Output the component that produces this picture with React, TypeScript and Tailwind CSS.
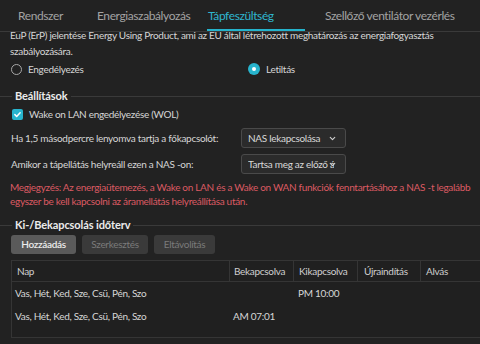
import { ChevronDown } from "lucide-react";

const TABS = [
    { label: "Rendszer", w: "w-[79px]" },
    { label: "Energiaszabályozás", w: "w-[111px]" },
    { label: "Tápfeszültség", w: "w-[117px]", active: true },
    { label: "Szellőző ventilátor vezérlés", w: "flex-1" },
];

const ROWS = [
    { days: "Vas, Hét, Ked, Sze, Csü, Pén, Szo", on: "", off: "PM 10:00" },
    { days: "Vas, Hét, Ked, Sze, Csü, Pén, Szo", on: "AM 07:01", off: "" },
];

function Legend({ title }: { title: string }) {
    return (
        <div className="flex items-center h-[14px]">
            <div className="w-[12px] h-px bg-[#3a3a3a]" />
            <span className="px-[3px] text-[11px] font-bold tracking-[-0.1px] text-[#ececec] whitespace-nowrap">{title}</span>
            <div className="flex-1 h-px bg-[#3a3a3a]" />
        </div>
    );
}

function Select({ value }: { value: string }) {
    return (
        <div className="relative w-[105px] h-[20px] rounded-[3px] border border-[#4a4a4a] bg-[#2b2b2b] flex items-center pl-[6px] overflow-hidden">
            <span className="block w-[86px] overflow-hidden whitespace-nowrap text-[#d8d8d8]">{value}</span>
            <ChevronDown className="absolute right-[8px] top-[5px] w-[9px] h-[9px] text-[#d0d0d0]" strokeWidth={3} />
        </div>
    );
}

export default function App() {
    return (
        <div className="w-[480px] h-[344px] overflow-hidden bg-[#222222] text-[#d6d6d6] text-[10px] tracking-[-0.3px] font-['Lato',sans-serif]">
            {/* Tabs */}
            <div className="flex h-[32px] border-b border-[#3a3a3a] pl-[18px] text-[12px] tracking-[-0.4px]">
                {TABS.map((t) => (
                    <div key={t.label} className={`relative ${t.w} h-[31px] flex items-center whitespace-nowrap ${t.active ? "text-[#2fb6cf]" : "text-[#a3a3a3]"}`}>
                        {t.label}
                        {t.active && <div className="absolute left-[-1px] bottom-0 w-[98px] h-[2px] bg-[#25b3cc]" />}
                    </div>
                ))}
            </div>

            <div className="mt-[-5px] px-[10px] leading-[16px]">
                <p>EuP (ErP) jelentése Energy Using Product, ami az EU által létrehozott meghatározás az energiafogyasztás</p>
                <p>szabályozására.</p>
            </div>

            {/* Radios */}
            <div className="flex items-center h-[20px] pl-[11px]">
                <div className="flex items-center w-[237px] gap-[6px]">
                    <div className="w-[11px] h-[11px] rounded-full border-[1.5px] border-[#a8a8a8]" />
                    <span>Engedélyezés</span>
                </div>
                <div className="flex items-center gap-[6px]">
                    <div className="w-[12px] h-[12px] rounded-full bg-[#27b4cd] flex items-center justify-center">
                        <div className="w-[4px] h-[4px] rounded-full bg-white" />
                    </div>
                    <span>Letiltás</span>
                </div>
            </div>

            {/* Beállítások */}
            <div className="mt-[10px]">
                <Legend title="Beállítások" />
            </div>
            <div className="px-[10px]">
                <div className="flex items-center h-[16px] mt-[3px] gap-[6px] pl-[2px]">
                    <div className="w-[11px] h-[11px] rounded-[2px] bg-[#27b4cd] flex items-center justify-center">
                        <svg viewBox="0 0 12 12" className="w-[9px] h-[9px]" fill="none" stroke="white" strokeWidth="2" strokeLinecap="round" strokeLinejoin="round">
                            <path d="M2.5 6.2l2.4 2.4 4.6-5" />
                        </svg>
                    </div>
                    <span>Wake on LAN engedélyezése (WOL)</span>
                </div>
                <div className="flex items-center h-[20px] mt-[6px]">
                    <span className="w-[231px] pl-[1px]">Ha 1,5 másodpercre lenyomva tartja a főkapcsolót:</span>
                    <Select value="NAS lekapcsolása" />
                </div>
                <div className="flex items-center h-[20px] mt-[6px]">
                    <span className="w-[231px] pl-[1px]">Amikor a tápellátás helyreáll ezen a NAS -on:</span>
                    <Select value="Tartsa meg az előző á" />
                </div>
                <div className="mt-[6px] text-[#dc5a62] leading-[14px] whitespace-nowrap">
                    <p>Megjegyzés: Az energiaütemezés, a Wake on LAN és a Wake on WAN funkciók fenntartásához a NAS -t legalább</p>
                    <p>egyszer be kell kapcsolni az áramellátás helyreállítása után.</p>
                </div>
            </div>

            {/* Ki-/Bekapcsolás időterv */}
            <div className="mt-[10px]">
                <Legend title="Ki-/Bekapcsolás időterv" />
            </div>
            <div className="px-[11px]">
                <div className="flex gap-[6px] mt-[3px]">
                    <button className="h-[19px] w-[65px] rounded-[3px] bg-[#5a5a5a] text-[#ececec] font-semibold">Hozzáadás</button>
                    <button className="h-[19px] w-[66px] rounded-[3px] bg-[#3a3a3a] text-[#7a7a7a]">Szerkesztés</button>
                    <button className="h-[19px] w-[61px] rounded-[3px] bg-[#3a3a3a] text-[#7a7a7a]">Eltávolítás</button>
                </div>

                <div className="mt-[6px] w-[480px] border border-[#353535] bg-[#202020]">
                    <div className="flex h-[21px] border-b border-[#353535] text-[#cfcfcf]">
                        <div className="w-[218px] pl-[5px] flex items-center border-r border-[#353535]">Nap</div>
                        <div className="w-[64px] pl-[4px] flex items-center border-r border-[#353535]">Bekapcsolva</div>
                        <div className="w-[64px] pl-[5px] flex items-center border-r border-[#353535]">Kikapcsolva</div>
                        <div className="w-[63px] pl-[6px] flex items-center border-r border-[#353535]">Újraindítás</div>
                        <div className="flex-1 pl-[5px] flex items-center">Alvás</div>
                    </div>
                    <div className="pb-[9px]">
                        {ROWS.map((r, i) => (
                            <div key={i} className="flex h-[23px] items-center">
                                <div className="w-[218px] pl-[3px]">{r.days}</div>
                                <div className="w-[64px] pl-[3px]">{r.on}</div>
                                <div className="w-[64px] pl-[4px]">{r.off}</div>
                            </div>
                        ))}
                    </div>
                </div>
            </div>
        </div>
    );
}
